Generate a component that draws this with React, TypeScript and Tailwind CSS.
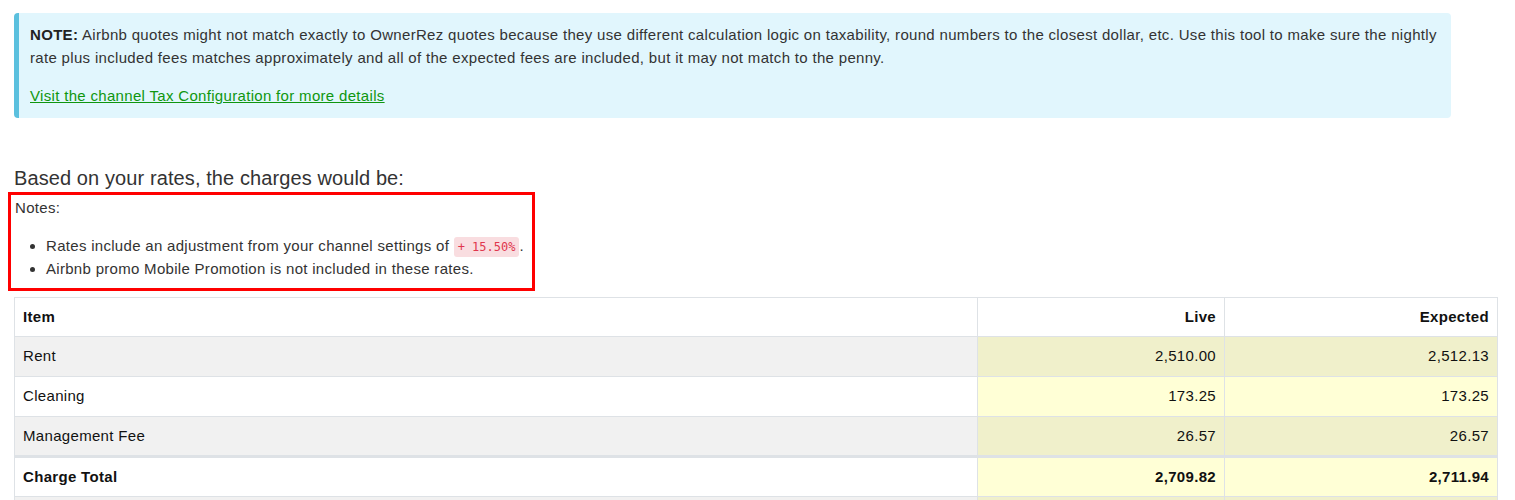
const rows = [
  { item: "Rent", live: "2,510.00", expected: "2,512.13" },
  { item: "Cleaning", live: "173.25", expected: "173.25" },
  { item: "Management Fee", live: "26.57", expected: "26.57" },
];

export default function App() {
  return (
    <div className="min-h-screen bg-white px-[14px] pt-[13px] font-['Liberation_Sans',Arial,sans-serif] text-[15px] tracking-[0.32px] text-[#212529]">
      <div className="w-[1437px] rounded-[4px] border-l-[5px] border-[#5bc0de] bg-[#e1f6fd] pb-[11px] pl-[11px] pr-[4px] pt-[10px] leading-[23px] text-[#333]">
        <p>
          <b className="text-[#222]">NOTE:</b> Airbnb quotes might not match exactly to OwnerRez quotes because they use
          different calculation logic on taxability, round numbers to the closest dollar, etc. Use this tool to make sure
          the nightly rate plus included fees matches approximately and all of the expected fees are included, but it may
          not match to the penny.
        </p>
        <p className="mt-[15px]">
          <a href="#" className="text-[#0f960f] underline">
            Visit the channel Tax Configuration for more details
          </a>
        </p>
      </div>

      <h3 className="mt-[48px] text-[20px] leading-[24px] tracking-[0.1px] text-[#333]">
        Based on your rates, the charges would be:
      </h3>

      <div className="-ml-[6px] mt-[2px] w-[527px] border-[3px] border-[#ff0000] px-[4px] pb-[8px] pt-[1px] text-[15px] leading-[23px] tracking-[0.3px] text-[#333]">
        <div>Notes:</div>
        <ul className="mt-[15px] list-disc pl-[31px]">
          <li>
            Rates include an adjustment from your channel settings of{" "}
            <code className="rounded-[3px] bg-[#f9dde0] px-[4px] py-[3px] font-['DejaVu_Sans_Mono',monospace] text-[12px] leading-none tracking-normal text-[#e0364d]">
              + 15.50%
            </code>
            .
          </li>
          <li>Airbnb promo Mobile Promotion is not included in these rates.</li>
        </ul>
      </div>

      <table className="mt-[6px] w-[1484px] border-collapse border border-[#dee2e6] text-[15px] text-[#111]">
        <colgroup>
          <col className="w-[963px]" />
          <col className="w-[247px]" />
          <col />
        </colgroup>
        <thead>
          <tr className="h-[39px] bg-white">
            <th className="border border-[#dee2e6] px-[8px] text-left font-bold">Item</th>
            <th className="border border-[#dee2e6] px-[8px] text-right font-bold">Live</th>
            <th className="border border-[#dee2e6] px-[8px] text-right font-bold">Expected</th>
          </tr>
        </thead>
        <tbody>
          {rows.map((r, i) => {
            const odd = i % 2 === 0;
            return (
              <tr key={r.item} className="h-[40px]">
                <td className={`border border-[#dee2e6] px-[8px] ${odd ? "bg-[#f1f1f1]" : "bg-white"}`}>{r.item}</td>
                <td className={`border border-[#dee2e6] px-[8px] text-right ${odd ? "bg-[#f0f0cb]" : "bg-[#ffffd6]"}`}>{r.live}</td>
                <td className={`border border-[#dee2e6] px-[8px] text-right ${odd ? "bg-[#f0f0cb]" : "bg-[#ffffd6]"}`}>{r.expected}</td>
              </tr>
            );
          })}
          <tr className="h-[40px] font-bold">
            <td className="border border-t-[3px] border-[#dee2e6] bg-white px-[8px]">Charge Total</td>
            <td className="border border-t-[3px] border-[#dee2e6] bg-[#ffffd6] px-[8px] text-right">2,709.82</td>
            <td className="border border-t-[3px] border-[#dee2e6] bg-[#ffffd6] px-[8px] text-right">2,711.94</td>
          </tr>
          <tr className="h-[40px]">
            <td className="border border-[#dee2e6] bg-[#f1f1f1] px-[8px]"></td>
            <td className="border border-[#dee2e6] bg-[#f0f0cb] px-[8px]"></td>
            <td className="border border-[#dee2e6] bg-[#f0f0cb] px-[8px]"></td>
          </tr>
        </tbody>
      </table>
    </div>
  );
}
